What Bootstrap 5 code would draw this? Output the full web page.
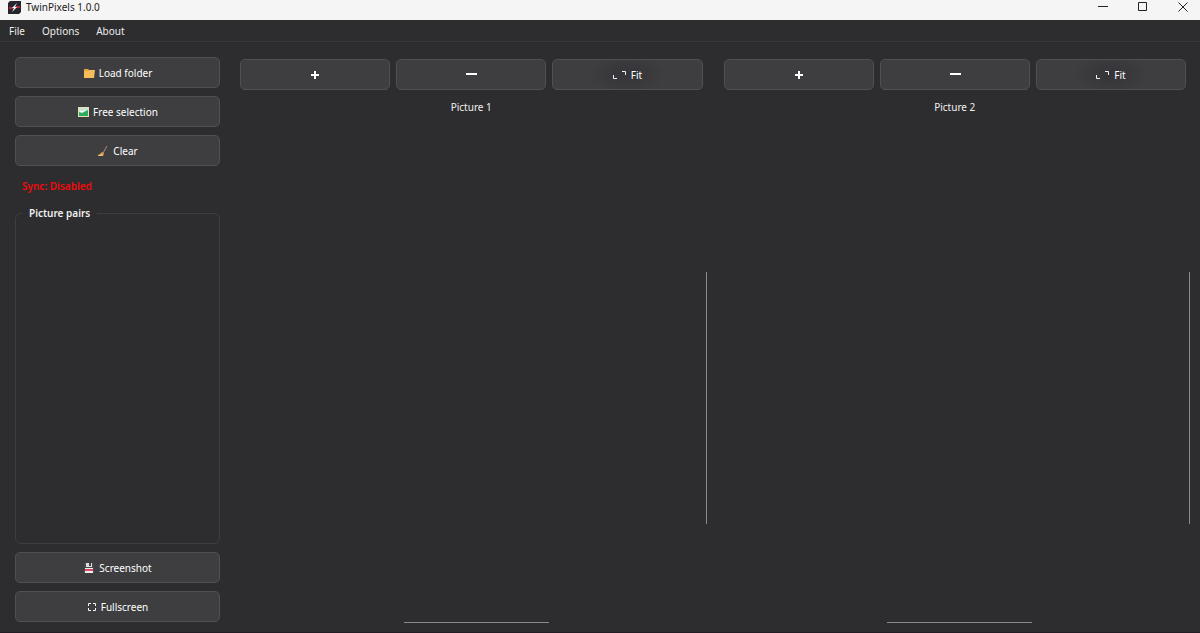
<!DOCTYPE html>
<html lang="en">
<head>
<meta charset="utf-8">
<meta name="viewport" content="width=device-width, initial-scale=1">
<title>TwinPixels 1.0.0</title>
<link href="https://cdn.jsdelivr.net/npm/bootstrap@5.3.0/dist/css/bootstrap.min.css" rel="stylesheet">
<style>
  body { background: #2d2d2f; color: #f0f0f0; font: 10px/16px "Noto Sans", "Open Sans", sans-serif; border-bottom: 1px solid #221d24; }
  .titlebar { height: 20px; padding: 0 9px 6px 8px; background: #f5f5f5; color: #1b1b1b; }
  .titlebar span { padding-left: 5px; }
  .win-btn { width: 16px; height: 14px; color: #222; }
  .menubar { height: 22px; padding: 0 9px; gap: 17px; border-bottom: 1px solid #38383a; }
  .menubar a { color: #ececec; text-decoration: none; line-height: 22px; }
  .workspace { padding: 15px 10px 9px 15px; gap: 20px; }
  .side { width: 205px; gap: 8px; padding-bottom: 1px; }
  .tool-btn { height: 31px; padding: 0; gap: 4px; font-size: inherit; line-height: 16px; color: #fff; background: #3e3e40; border: 1px solid #505052; border-radius: 5px; display: flex; align-items: center; justify-content: center; }
  .tool-btn:hover, .tool-btn:active { background: #48484a !important; color: #fff !important; border-color: #606062 !important; }
  .sync-state { color: #f20a0a; padding: 4px 7px 3px; }
  .pairs { border: 1px solid #3e3e40; border-radius: 6px; padding: 0 6px; }
  .pairs legend { float: none; width: auto; margin: 0; padding: 0 7px; font-size: 10px; line-height: 16px; font-weight: 600; }
  .viewers { gap: 17px; }
  .viewer-tools { gap: 6px; padding: 2px 4px 0 0; }
  .fit { background: radial-gradient(ellipse 38px 20px at 50% 50%, #343439, #3e3e40); }
  .viewer-title { padding: 9px 4px 0 0; }
  .thumb { background: #8a8a8c; }
  .v-track { width: 1px; }
  .h-track { height: 1px; }
  .before-v { flex: 157; } .thumb-v { flex: 251; } .after-v { flex: 98; }
  .before-h { flex: 164; } .thumb-h { flex: 145; } .after-h { flex: 158; }
</style>
</head>
<body class="d-flex flex-column min-vh-100">
<header class="titlebar d-flex align-items-center">
  <svg width="13" height="13" viewBox="0 0 13 13" aria-hidden="true"><path d="M2 0h11v11l-2 2H0V2z" fill="#25252b"/><path d="M1 7h4M8 6h4" stroke="#b3243c" stroke-width="2"/><path d="M9 2 4 7h2L4 11l5-5H7z" fill="#fff"/></svg>
  <span>TwinPixels 1.0.0</span>
  <div class="ms-auto d-flex gap-4">
    <button class="btn p-0 border-0 win-btn d-flex align-items-center justify-content-center" aria-label="Minimize"><svg width="10" height="10" viewBox="0 0 10 10" fill="none" stroke="currentColor"><path d="M0 4.500h10"/></svg></button>
    <button class="btn p-0 border-0 win-btn d-flex align-items-center justify-content-center" aria-label="Maximize"><svg width="10" height="10" viewBox="0 0 10 10" fill="none" stroke="currentColor"><path d="M.5 .5h8v8h-8z"/></svg></button>
    <button class="btn p-0 border-0 win-btn d-flex align-items-center justify-content-center" aria-label="Close"><svg width="10" height="10" viewBox="0 0 10 10" fill="none" stroke="currentColor"><path d="m.5.5 9 9m0-9-9 9"/></svg></button>
  </div>
</header>
<nav class="menubar d-flex align-items-center" aria-label="Main menu">
  <a href="#">File</a><a href="#">Options</a><a href="#">About</a>
</nav>
<main class="workspace d-flex flex-fill">
  <aside class="side d-flex flex-column flex-shrink-0">
    <button class="btn tool-btn"><svg width="12" height="12" viewBox="0 0 12 12" aria-hidden="true"><path d="M1 2h4l1 1h5v8H1z" fill="#e5a43c"/><path d="M1 4h4l1-1h6l-1 8H1z" fill="#f6bd5b"/></svg>Load folder</button>
    <button class="btn tool-btn"><svg width="12" height="12" viewBox="0 0 12 12" aria-hidden="true"><path d="M1 1h11v10H1z" fill="#e9dfb2"/><path d="M2 2h9v8H2z" fill="#c5e5d5"/><path d="m2 6 3 1 6-3v6H2z" fill="#2cac62"/><path d="m3 5 2 1 3-2" stroke="#fff" fill="none"/></svg>Free selection</button>
    <button class="btn tool-btn"><svg width="12" height="12" viewBox="0 0 12 12" aria-hidden="true"><path d="m6 8 4-7" stroke="#a88a80"/><path d="M5 7 7 8 6 11H1V10q3-1 4-3z" fill="#e8b66c"/><path d="m5 7 2 1-1 1-2-1z" fill="#b77b46"/></svg>Clear</button>
    <div class="sync-state fw-semibold">Sync: Disabled</div>
    <fieldset class="pairs flex-fill"><legend>Picture pairs</legend></fieldset>
    <button class="btn tool-btn"><svg width="12" height="12" viewBox="0 0 12 12" aria-hidden="true"><path d="M1 1h9l1 1v9H1z" fill="#49464e"/><path d="M3 1h6v4H3z" fill="#ddd"/><path d="M6 1h2v3H6z" fill="#444"/><path d="M2 6h8v5H2z" fill="#eee"/><path d="M2 7h8v2H2z" fill="#e04561"/></svg>Screenshot</button>
    <button class="btn tool-btn"><svg width="10" height="10" viewBox="0 0 10 10" fill="none" stroke="#f4f4f4" aria-hidden="true"><path d="M1.500 4V1.500H4M6 1.500h2.500V4M8.500 6v2.500H6M4 8.500H1.500V6"/></svg>Fullscreen</button>
  </aside>
  <div class="viewers d-flex flex-fill">
    <section class="d-flex flex-column flex-fill w-50">
      <div class="viewer-tools row row-cols-3 flex-nowrap g-0">
        <button class="btn tool-btn col flex-fill" aria-label="Zoom in"><svg width="8" height="8" viewBox="0 0 8 8" stroke="#fff" stroke-width="2"><path d="M4 0v8M0 4h8"/></svg></button>
        <button class="btn tool-btn col flex-fill" aria-label="Zoom out"><svg width="12" height="8" viewBox="0 0 12 8" stroke="#fff" stroke-width="2"><path d="M1 3h11"/></svg></button>
        <button class="btn tool-btn fit col flex-fill"><svg width="14" height="10" viewBox="0 0 14 10" fill="none" stroke="#f0f0f0" aria-hidden="true"><path d="M.5 5v3.500H4M9 1.500h3.500V5"/></svg>Fit</button>
      </div>
      <div class="viewer-title text-center">Picture 1</div>
      <div class="d-flex flex-fill">
        <div class="flex-fill"></div>
        <div class="v-track d-flex flex-column"><div class="before-v"></div><div class="thumb thumb-v"></div><div class="after-v"></div></div>
      </div>
      <div class="h-track d-flex"><div class="before-h"></div><div class="thumb thumb-h"></div><div class="after-h"></div></div>
    </section>
    <section class="d-flex flex-column flex-fill w-50">
      <div class="viewer-tools row row-cols-3 flex-nowrap g-0">
        <button class="btn tool-btn col flex-fill" aria-label="Zoom in"><svg width="8" height="8" viewBox="0 0 8 8" stroke="#fff" stroke-width="2"><path d="M4 0v8M0 4h8"/></svg></button>
        <button class="btn tool-btn col flex-fill" aria-label="Zoom out"><svg width="12" height="8" viewBox="0 0 12 8" stroke="#fff" stroke-width="2"><path d="M1 3h11"/></svg></button>
        <button class="btn tool-btn fit col flex-fill"><svg width="14" height="10" viewBox="0 0 14 10" fill="none" stroke="#f0f0f0" aria-hidden="true"><path d="M.5 5v3.500H4M9 1.500h3.500V5"/></svg>Fit</button>
      </div>
      <div class="viewer-title text-center">Picture 2</div>
      <div class="d-flex flex-fill">
        <div class="flex-fill"></div>
        <div class="v-track d-flex flex-column"><div class="before-v"></div><div class="thumb thumb-v"></div><div class="after-v"></div></div>
      </div>
      <div class="h-track d-flex"><div class="before-h"></div><div class="thumb thumb-h"></div><div class="after-h"></div></div>
    </section>
  </div>
</main>
<script src="https://cdn.jsdelivr.net/npm/bootstrap@5.3.0/dist/js/bootstrap.bundle.min.js"></script>
</body>
</html>
